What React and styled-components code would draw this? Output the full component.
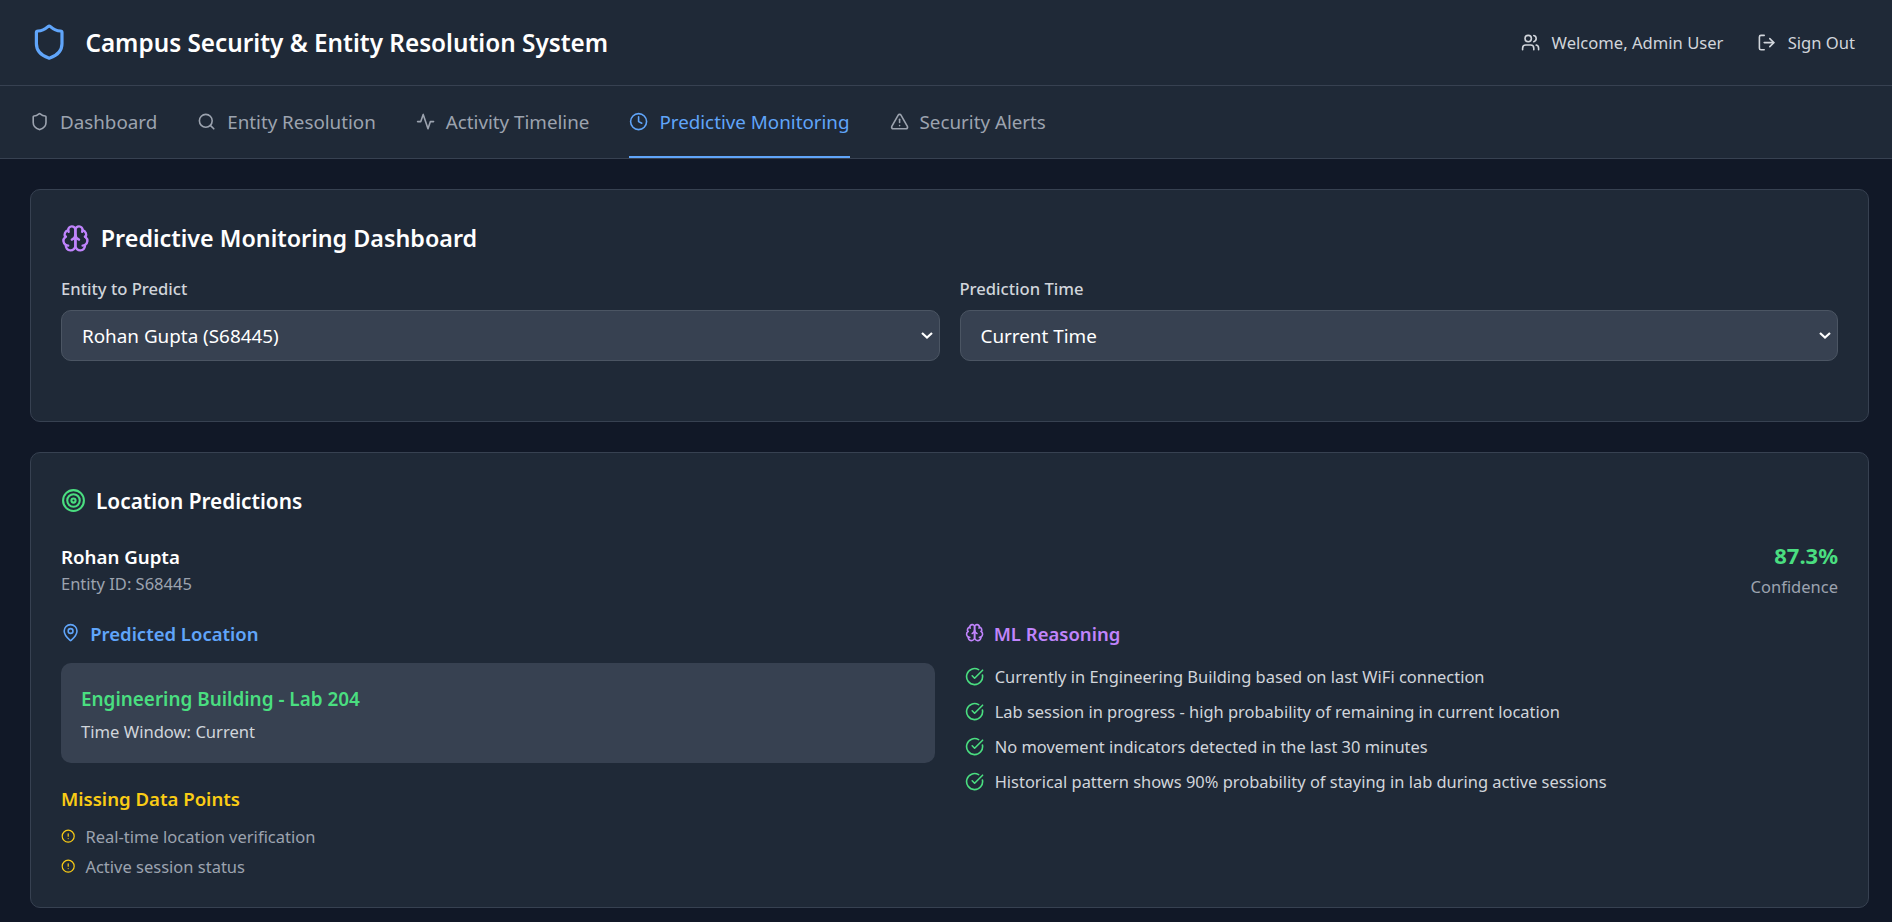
import React from "react";
import styled, { createGlobalStyle } from "styled-components";
import {
  Shield,
  Search,
  Clock,
  TriangleAlert,
  Users,
  LogOut,
  Target,
  MapPin,
  CircleCheckBig,
  CircleAlert,
} from "lucide-react";

const GlobalStyle = createGlobalStyle`
  * { box-sizing: border-box; }
  body {
    margin: 0;
    background: #111827;
    color: #fff;
    font-family: "Noto Sans", "Open Sans", sans-serif;
  }
`;

// the screenshot has the older lucide drawings of these two
function Svg({ size, color = "currentColor", children }) {
  return (
    <svg
      width={size}
      height={size}
      viewBox="0 0 24 24"
      fill="none"
      stroke={color}
      strokeWidth="2"
      strokeLinecap="round"
      strokeLinejoin="round"
    >
      {children}
    </svg>
  );
}

const Brain = (props) => (
  <Svg {...props}>
    <path d="M12 5a3 3 0 1 0-5.997.125 4 4 0 0 0-2.526 5.77 4 4 0 0 0 .556 6.588A4 4 0 1 0 12 18Z" />
    <path d="M12 5a3 3 0 1 1 5.997.125 4 4 0 0 1 2.526 5.77 4 4 0 0 1-.556 6.588A4 4 0 1 1 12 18Z" />
    <path d="M15 13a4.5 4.5 0 0 1-3-4 4.5 4.5 0 0 1-3 4" />
    <path d="M17.599 6.5a3 3 0 0 0 .399-1.375" />
    <path d="M6.003 5.125A3 3 0 0 0 6.401 6.5" />
    <path d="M3.477 10.896a4 4 0 0 1 .585-.396" />
    <path d="M19.938 10.5a4 4 0 0 1 .585.396" />
    <path d="M6 18a4 4 0 0 1-1.967-.516" />
    <path d="M19.967 17.484A4 4 0 0 1 18 18" />
  </Svg>
);

const Activity = (props) => (
  <Svg {...props}>
    <polyline points="22 12 18 12 15 21 9 3 6 12 2 12" />
  </Svg>
);

const navItems = [
  { label: "Dashboard", icon: Shield },
  { label: "Entity Resolution", icon: Search },
  { label: "Activity Timeline", icon: Activity },
  { label: "Predictive Monitoring", icon: Clock, active: true },
  { label: "Security Alerts", icon: TriangleAlert },
];

const reasons = [
  "Currently in Engineering Building based on last WiFi connection",
  "Lab session in progress - high probability of remaining in current location",
  "No movement indicators detected in the last 30 minutes",
  "Historical pattern shows 90% probability of staying in lab during active sessions",
];

const missing = ["Real-time location verification", "Active session status"];

export default function App() {
  return (
    <>
      <GlobalStyle />
      <Header>
        <Brand>
          <Shield size={38.4} color="#60a5fa" />
          <Title>Campus Security &amp; Entity Resolution System</Title>
        </Brand>
        <UserArea>
          <UserItem>
            <Users size={19.2} />
            Welcome, Admin User
          </UserItem>
          <UserItem>
            <LogOut size={19.2} />
            Sign Out
          </UserItem>
        </UserArea>
      </Header>
      <Nav>
        {navItems.map((item) => (
          <NavItem key={item.label} $active={item.active}>
            <item.icon size={19.2} />
            {item.label}
          </NavItem>
        ))}
      </Nav>
      <Main>
        <Card>
          <CardTitle>
            <Brain size={28.8} color="#c084fc" />
            Predictive Monitoring Dashboard
          </CardTitle>
          <Fields>
            <div>
              <Label>Entity to Predict</Label>
              <Select defaultValue="s68445">
                <option value="s68445">Rohan Gupta (S68445)</option>
              </Select>
            </div>
            <div>
              <Label>Prediction Time</Label>
              <Select defaultValue="now">
                <option value="now">Current Time</option>
              </Select>
            </div>
          </Fields>
        </Card>
        <Card $tail>
          <SubTitle>
            <Target size={25} color="#4ade80" />
            Location Predictions
          </SubTitle>
          <EntityRow>
            <div>
              <EntityName>Rohan Gupta</EntityName>
              <EntityId>Entity ID: S68445</EntityId>
            </div>
            <Confidence>
              <ConfidenceValue>87.3%</ConfidenceValue>
              <ConfidenceLabel>Confidence</ConfidenceLabel>
            </Confidence>
          </EntityRow>
          <Columns>
            <div>
              <SectionTitle $color="#60a5fa">
                <MapPin size={19.2} />
                Predicted Location
              </SectionTitle>
              <LocationBox>
                <LocationName>Engineering Building - Lab 204</LocationName>
                <LocationTime>Time Window: Current</LocationTime>
              </LocationBox>
              <MissingTitle>Missing Data Points</MissingTitle>
              <MissingList>
                {missing.map((text) => (
                  <MissingItem key={text}>
                    <CircleAlert size={14.4} color="#facc15" />
                    {text}
                  </MissingItem>
                ))}
              </MissingList>
            </div>
            <div>
              <SectionTitle $color="#c084fc">
                <Brain size={19.2} />
                ML Reasoning
              </SectionTitle>
              <ReasonList>
                {reasons.map((text) => (
                  <ReasonItem key={text}>
                    <CircleCheckBig size={19.2} color="#4ade80" />
                    {text}
                  </ReasonItem>
                ))}
              </ReasonList>
            </div>
          </Columns>
        </Card>
      </Main>
    </>
  );
}

const Header = styled.header`
  height: 86px;
  display: flex;
  align-items: center;
  justify-content: space-between;
  padding: 0 30px;
  background: #1f2937;
  border-bottom: 1px solid #374151;
`;

const Brand = styled.div`
  display: flex;
  align-items: center;
  gap: 17px;
`;

const Title = styled.h1`
  margin: 0;
  font-size: 24.3px;
  font-weight: 600;
`;

const UserArea = styled.div`
  display: flex;
  align-items: center;
  gap: 34px;
  padding-right: 7px;
`;

const UserItem = styled.div`
  display: flex;
  align-items: center;
  gap: 11px;
  font-size: 16.6px;
  color: #d1d5db;
`;

const Nav = styled.nav`
  height: 73px;
  display: flex;
  gap: 40px;
  padding: 0 30px;
  background: #1f2937;
  border-bottom: 1px solid #374151;
`;

const NavItem = styled.div`
  display: flex;
  align-items: center;
  gap: 10.8px;
  padding-top: 1px;
  font-size: 18.8px;
  color: ${(p) => (p.$active ? "#60a5fa" : "#9ca3af")};
  border-bottom: 2px solid ${(p) => (p.$active ? "#60a5fa" : "transparent")};
`;

const Main = styled.main`
  padding: 30px 23px 15px 30px;
  display: flex;
  flex-direction: column;
  gap: 30px;
`;

const Card = styled.section`
  background: #1f2937;
  border: 1px solid #374151;
  border-radius: 10px;
  padding: ${(p) => (p.$tail ? "34px 30px 29px" : "32px 30px 60px")};
`;

const CardTitle = styled.h2`
  display: flex;
  align-items: center;
  gap: 11px;
  margin: 0 0 22.5px;
  font-size: 23.3px;
  font-weight: 600;
`;

const Fields = styled.div`
  display: grid;
  grid-template-columns: 1fr 1fr;
  gap: 20px;
`;

const Label = styled.label`
  display: block;
  margin-bottom: 10px;
  font-size: 16.6px;
  font-weight: 500;
  color: #d1d5db;
`;

const Select = styled.select`
  width: 100%;
  height: 51px;
  padding: 2px 16px 0 20px;
  font: inherit;
  font-size: 18.85px;
  color: #fff;
  background-color: #374151;
  background-image: url("data:image/svg+xml,%3Csvg xmlns='http://www.w3.org/2000/svg' viewBox='0 0 12 7'%3E%3Cpath d='M1 1l5 4.5L11 1' fill='none' stroke='white' stroke-width='2.2'/%3E%3C/svg%3E");
  background-repeat: no-repeat;
  background-position: right 6px center;
  background-size: 12px 7px;
  border: 1px solid #4b5563;
  border-radius: 10px;
  appearance: none;
`;

const SubTitle = styled.h3`
  display: flex;
  align-items: center;
  gap: 10px;
  margin: 0 0 29px;
  font-size: 20.8px;
  font-weight: 600;
`;

const EntityRow = styled.div`
  display: flex;
  justify-content: space-between;
  margin-bottom: 23px;
`;

const EntityName = styled.div`
  font-size: 18.7px;
  font-weight: 600;
`;

const EntityId = styled.div`
  margin-top: 3px;
  font-size: 16.5px;
  color: #9ca3af;
`;

const Confidence = styled.div`
  text-align: right;
`;

const ConfidenceValue = styled.div`
  font-size: 22px;
  line-height: 22px;
  font-weight: 700;
  color: #4ade80;
`;

const ConfidenceLabel = styled.div`
  margin-top: 9px;
  font-size: 16.5px;
  color: #9ca3af;
`;

const Columns = styled.div`
  display: grid;
  grid-template-columns: 1fr 1fr;
  gap: 30px;
`;

const SectionTitle = styled.h4`
  display: flex;
  align-items: center;
  gap: 10px;
  margin: 0 0 17px;
  font-size: 18.5px;
  font-weight: 600;
  color: ${(p) => p.$color};
`;

const LocationBox = styled.div`
  height: 100px;
  padding: 23px 20px 0;
  background: #374151;
  border-radius: 10px;
`;

const LocationName = styled.div`
  font-size: 18.9px;
  font-weight: 600;
  color: #4ade80;
  margin-bottom: 8px;
`;

const LocationTime = styled.div`
  font-size: 16.6px;
  color: #d1d5db;
`;

const MissingTitle = styled.h5`
  margin: 23px 0 14px;
  font-size: 18.6px;
  font-weight: 600;
  color: #facc15;
`;

const MissingList = styled.ul`
  margin: 0;
  padding: 0;
  list-style: none;
  display: flex;
  flex-direction: column;
  gap: 7px;
`;

const MissingItem = styled.li`
  display: flex;
  align-items: center;
  gap: 10px;
  font-size: 16.5px;
  color: #9ca3af;
`;

const ReasonList = styled.ul`
  margin: 0;
  padding: 2.5px 0 0;
  list-style: none;
  display: flex;
  flex-direction: column;
  gap: 12px;
`;

const ReasonItem = styled.li`
  display: flex;
  align-items: center;
  gap: 11px;
  font-size: 16.45px;
  color: #d1d5db;
`;
